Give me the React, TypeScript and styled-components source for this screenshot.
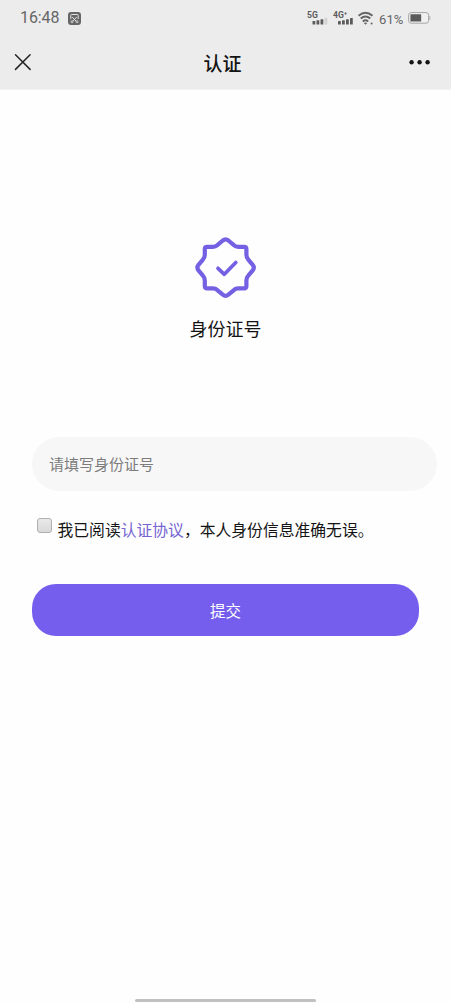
import React, { useState } from "react";
import styled, { createGlobalStyle } from "styled-components";

const GlobalStyle = createGlobalStyle`
  * { box-sizing: border-box; }
  body {
    margin: 0;
    background: #fefefe;
    font-family: "Noto Sans CJK SC", sans-serif;
    color: #141414;
  }
`;

const Screen = styled.div`
  height: 1003px;
  display: flex;
  flex-direction: column;
  overflow: hidden;
`;

const Header = styled.header`
  height: 90px;
  flex: none;
  background: #ececec;
  border-bottom: 1px solid #f3f3f3;
`;

const StatusBar = styled.div`
  height: 36px;
  display: flex;
  align-items: center;
  justify-content: space-between;
  padding: 0 20px;
  color: #666;
`;

const StatusGroup = styled.div`
  display: flex;
  align-items: center;
`;

const Clock = styled.span`
  font: 16px/20px Roboto, sans-serif;
  width: 48px;
  letter-spacing: -0.1px;
`;

const Percent = styled.span`
  font: 13px/20px Roboto, sans-serif;
  width: 29px;
  padding-top: 3px;
  letter-spacing: 0.1px;
`;

const NavBar = styled.div`
  height: 52px;
  display: grid;
  grid-template-columns: 60px 1fr 60px;
  align-items: center;
  padding: 0 20px 0 14px;
`;

const IconButton = styled.button<{ $end?: boolean }>`
  border: 0;
  padding: 0;
  background: none;
  display: flex;
  justify-content: ${(p) => (p.$end ? "flex-end" : "flex-start")};
`;

const Title = styled.h1`
  margin: 0;
  padding-top: 1px;
  text-align: center;
  font-size: 19px;
  line-height: 28px;
  font-weight: 500;
`;

const Content = styled.main`
  flex: 1;
  display: flex;
  flex-direction: column;
  padding: 146px 32px 0;
`;

const Hero = styled.section`
  display: flex;
  flex-direction: column;
  align-items: center;
`;

const HeroLabel = styled.h2`
  margin: 14px 0 0;
  font-size: 18px;
  line-height: 28px;
  font-weight: 400;
`;

const IdInput = styled.input`
  width: 405px;
  height: 54px;
  margin-top: 95px;
  padding: 0 17px 2px;
  border: 0;
  border-radius: 27px;
  background: #f7f7f7;
  font: 15px/24px "Noto Sans CJK SC", sans-serif;
  outline: none;
  &::placeholder { color: #7c7c7c; opacity: 1; }
`;

const Agreement = styled.label`
  display: flex;
  align-items: flex-start;
  margin: 26px 0 0 5px;
  font-size: 15.8px;
  line-height: 26px;
  white-space: nowrap;
`;

const Checkbox = styled.input`
  appearance: none;
  flex: none;
  width: 15px;
  height: 15px;
  margin: 1px 5.5px 0 0;
  border: 1px solid #b0b0b0;
  border-radius: 3px;
  background: linear-gradient(#e9e9e9, #d9d9d9);
  &:checked { background: #755eed; }
`;

const Link = styled.span`
  color: #7564d2;
`;

const Submit = styled.button`
  height: 52px;
  margin-top: 41px;
  border: 0;
  border-radius: 24px;
  background: #755eed;
  color: #fff;
  font: 15.5px/24px "Noto Sans CJK SC", sans-serif;
`;

const HomeArea = styled.footer`
  height: 4px;
  flex: none;
  display: flex;
  justify-content: center;
`;

const HomeIndicator = styled.div`
  width: 181px;
  height: 3px;
  border-radius: 2px;
  background: #c0c0c0;
`;

const ScreenshotIcon = () => (
  <svg width="13" height="13" viewBox="0 0 13 13">
    <rect width="13" height="13" rx="3" fill="#666" />
    <path d="M2.8 7V3.3q0-.8.8-.8h5.8q.8 0 .8.8V7" fill="none" stroke="#e2e2e2" strokeWidth="1" />
    <path d="M4.2 5l4 4.2M8.8 5l-4 4.2" stroke="#e2e2e2" strokeWidth="1" />
    <circle cx="4" cy="9.7" r="1" fill="none" stroke="#e2e2e2" strokeWidth=".8" />
    <circle cx="9" cy="9.7" r="1" fill="none" stroke="#e2e2e2" strokeWidth=".8" />
  </svg>
);

const Signal = ({ label, width, x, weak }: { label: string; width: number; x: number; weak?: boolean }) => (
  <svg width={width} height="16" viewBox={`0 0 ${width} 16`}>
    <text x="0" y="7.8" fontFamily="Roboto, sans-serif" fontSize="8.6" fontWeight="700" fill="#5c5c5c">
      {label}
    </text>
    <g fill="#5c5c5c">
      <rect x={x} y="11" width="2.8" height="3.5" rx=".5" />
      <rect x={x + 4} y="10.2" width="2.8" height="4.3" rx=".5" />
      <rect x={x + 8} y="9.2" width="2.8" height="5.3" rx=".5" />
      <rect x={x + 12} y="8" width="2.8" height="6.5" rx=".5" fill={weak ? "#d2d2d2" : "#5c5c5c"} />
    </g>
  </svg>
);

const WifiIcon = () => (
  <svg width="21" height="16" viewBox="0 0 21 16">
    <g fill="none" stroke="#646464" strokeWidth="1.9">
      <path d="M.5 5.7q7-6 14 0" />
      <path d="M2.7 8.6q4.8-4 9.6 0" />
      <path d="M4.8 11.4q2.7-2.2 5.4 0" />
    </g>
    <path d="M5.8 13.1q1.7-1.3 3.4 0L7.5 14.8z" fill="#646464" />
    <circle cx="13.6" cy="13.6" r="1" fill="#646464" />
  </svg>
);

const BatteryIcon = () => (
  <svg width="23" height="12" viewBox="0 0 23 12">
    <rect x=".6" y=".6" width="20" height="10.6" rx="2.6" fill="#f0f0f0" stroke="#a5a5a5" strokeWidth="1" />
    <rect x="2.4" y="2.3" width="10.8" height="7.3" rx=".6" fill="#5b5b5b" />
    <path d="M21.8 4v4" stroke="#b4b4b4" strokeWidth="1.1" />
  </svg>
);

const CloseIcon = () => (
  <svg width="18" height="18" viewBox="0 0 18 18">
    <path d="M1.5 1.8l14.6 14.6M16.1 1.8L1.5 16.4" stroke="#252525" strokeWidth="1.5" strokeLinecap="round" />
  </svg>
);

const MoreIcon = () => (
  <svg width="22" height="6" viewBox="0 0 22 6" fill="#141414">
    <circle cx="2.6" cy="3.2" r="2.2" />
    <circle cx="10.6" cy="3.2" r="2.2" />
    <circle cx="18.6" cy="3.2" r="2.2" />
  </svg>
);

const BadgeIcon = () => (
  <svg width="64" height="64" viewBox="0.4 0.4 64 64" fill="none" stroke="#7460e2" strokeLinecap="round" strokeLinejoin="round">
    <path
      strokeWidth="4.2"
      d="M29.2 4.9Q32 2.7 34.8 4.9L40 9.3Q42 11.2 44.8 11.2H50.5Q52.8 11.2 52.8 13.5V19.2Q52.8 22 54.7 24L59.1 29.2Q61.3 32 59.1 34.8L54.7 40Q52.8 42 52.8 44.8V50.5Q52.8 52.8 50.5 52.8H44.8Q42 52.8 40 54.7L34.8 59.1Q32 61.3 29.2 59.1L24 54.7Q22 52.8 19.2 52.8H13.5Q11.2 52.8 11.2 50.5V44.8Q11.2 42 9.3 40L4.9 34.8Q2.7 32 4.9 29.2L9.3 24Q11.2 22 11.2 19.2V13.5Q11.2 11.2 13.5 11.2H19.2Q22 11.2 24 9.3Z"
    />
    <path strokeWidth="3.7" d="M24.4 32.7L30.7 38.7L42.2 26.9" />
  </svg>
);

export default function App() {
  const [idNumber, setIdNumber] = useState("");
  const [agreed, setAgreed] = useState(false);

  return (
    <Screen>
      <GlobalStyle />
      <Header>
        <StatusBar>
          <StatusGroup>
            <Clock>16:48</Clock>
            <ScreenshotIcon />
          </StatusGroup>
          <StatusGroup>
            <Signal label="5G" width={26} x={5.5} weak />
            <Signal label="4G⁺" width={25} x={5} />
            <WifiIcon />
            <Percent>61%</Percent>
            <BatteryIcon />
          </StatusGroup>
        </StatusBar>
        <NavBar>
          <IconButton aria-label="关闭"><CloseIcon /></IconButton>
          <Title>认证</Title>
          <IconButton $end aria-label="更多"><MoreIcon /></IconButton>
        </NavBar>
      </Header>
      <Content>
        <Hero>
          <BadgeIcon />
          <HeroLabel>身份证号</HeroLabel>
        </Hero>
        <IdInput placeholder="请填写身份证号" value={idNumber} onChange={(e) => setIdNumber(e.target.value)} />
        <Agreement>
          <Checkbox type="checkbox" checked={agreed} onChange={(e) => setAgreed(e.target.checked)} />
          <span>我已阅读<Link>认证协议</Link>，本人身份信息准确无误。</span>
        </Agreement>
        <Submit>提交</Submit>
      </Content>
      <HomeArea><HomeIndicator /></HomeArea>
    </Screen>
  );
}
